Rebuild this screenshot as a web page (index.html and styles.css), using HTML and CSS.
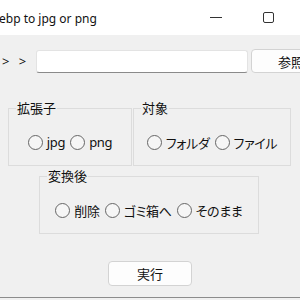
FILE: index.html
```html
<!DOCTYPE html>
<html lang="ja">
<head>
    <meta charset="UTF-8">
    <title>webp to jpg or png</title>
    <link rel="stylesheet" href="styles.css">
</head>
<body>
    <!-- タイトルバー -->
    <div class="titlebar">
        <span class="title">ebp to jpg or png</span>
        <span class="tb-btn minimize"></span>
        <span class="tb-btn maximize"></span>
    </div>

    <!-- 本体 -->
    <div class="client">
        <div class="path-row">
            <span class="arrow">&gt; &gt;</span>
            <input class="path-box" type="text">
            <button class="btn browse">参照</button>
        </div>

        <div class="group-row">
            <fieldset class="group ext">
                <legend>拡張子</legend>
                <div class="radios">
                    <label class="radio"><input type="radio" name="ext">jpg</label>
                    <label class="radio"><input type="radio" name="ext">png</label>
                </div>
            </fieldset>
            <fieldset class="group target">
                <legend>対象</legend>
                <div class="radios">
                    <label class="radio"><input type="radio" name="target">フォルダ</label>
                    <label class="radio"><input type="radio" name="target">ファイル</label>
                </div>
            </fieldset>
        </div>

        <fieldset class="group after">
            <legend>変換後</legend>
            <div class="radios">
                <label class="radio"><input type="radio" name="after">削除</label>
                <label class="radio"><input type="radio" name="after">ゴミ箱へ</label>
                <label class="radio"><input type="radio" name="after">そのまま</label>
            </div>
        </fieldset>

        <button class="btn run">実行</button>
    </div>
</body>
</html>
```

FILE: styles.css
```css
* {
    margin: 0;
    padding: 0;
    box-sizing: border-box;
}

body {
    width: 300px;
    height: 300px;
    overflow: hidden;
    background: #f0f0f0;
    font-family: "Noto Sans", "Noto Sans CJK JP", sans-serif;
    font-size: 13px;
    font-feature-settings: "palt";
    color: #111;
}

/* タイトルバー */
.titlebar {
    height: 35px;
    background: #fff;
    display: flex;
    align-items: center;
}

.title {
    flex: 1;
    font-size: 12px;
    margin: 2px 0 0 -1px;
}

.minimize {
    width: 12px;
    height: 1px;
    background: #333;
    margin-right: 41px;
}

.maximize {
    width: 11px;
    height: 11px;
    border: 1px solid #333;
    border-radius: 2px;
    margin-right: 26px;
}

/* 本体 */
.client {
    height: 263px;
    padding-top: 14px;
    border-bottom: 1px solid #8c8c8c;
}

.path-row {
    display: flex;
    align-items: center;
    height: 24px;
}

.arrow {
    width: 36px;
    flex-shrink: 0;
    padding-left: 2px;
    letter-spacing: 3px;
}

.path-box {
    width: 212px;
    height: 23px;
    flex-shrink: 0;
    margin-top: 1px;
    background: #fff;
    border: 1px solid #e3e3e3;
    border-bottom-color: #8a8a8a;
    border-radius: 3px;
}

.btn {
    font-family: inherit;
    font-size: 13px;
    color: #111;
    background: #fdfdfd;
    border: 1px solid #d3d3d3;
    border-radius: 4px;
}

.browse {
    width: 80px;
    height: 24px;
    margin-left: 3px;
    flex-shrink: 0;
}

/* グループ */
.group-row {
    display: flex;
    gap: 1px;
    margin: 27px 0 0 8px;
}

.group {
    border: 1px solid #dcdcdc;
    padding: 15px 7px 13px 7px;
    min-width: 0;
}

.group legend {
    padding: 0 1px 1px;
    line-height: 16px;
}

.ext {
    width: 124px;
}

.target {
    width: 158px;
}

.after {
    width: 220px;
    margin: 2px 0 0 39px;
}

.radios {
    display: flex;
    justify-content: center;
    align-items: center;
    gap: 5px;
    height: 20px;
}

.radio {
    display: flex;
    align-items: center;
    gap: 4px;
    white-space: nowrap;
    letter-spacing: -0.3px;
}

.radio input {
    appearance: none;
    width: 15px;
    height: 15px;
    border: 1px solid #666;
    border-radius: 50%;
    background: #f6f6f6;
    margin: 0;
}

.run {
    display: block;
    width: 84px;
    height: 25px;
    margin: 27px auto 0;
}
```
